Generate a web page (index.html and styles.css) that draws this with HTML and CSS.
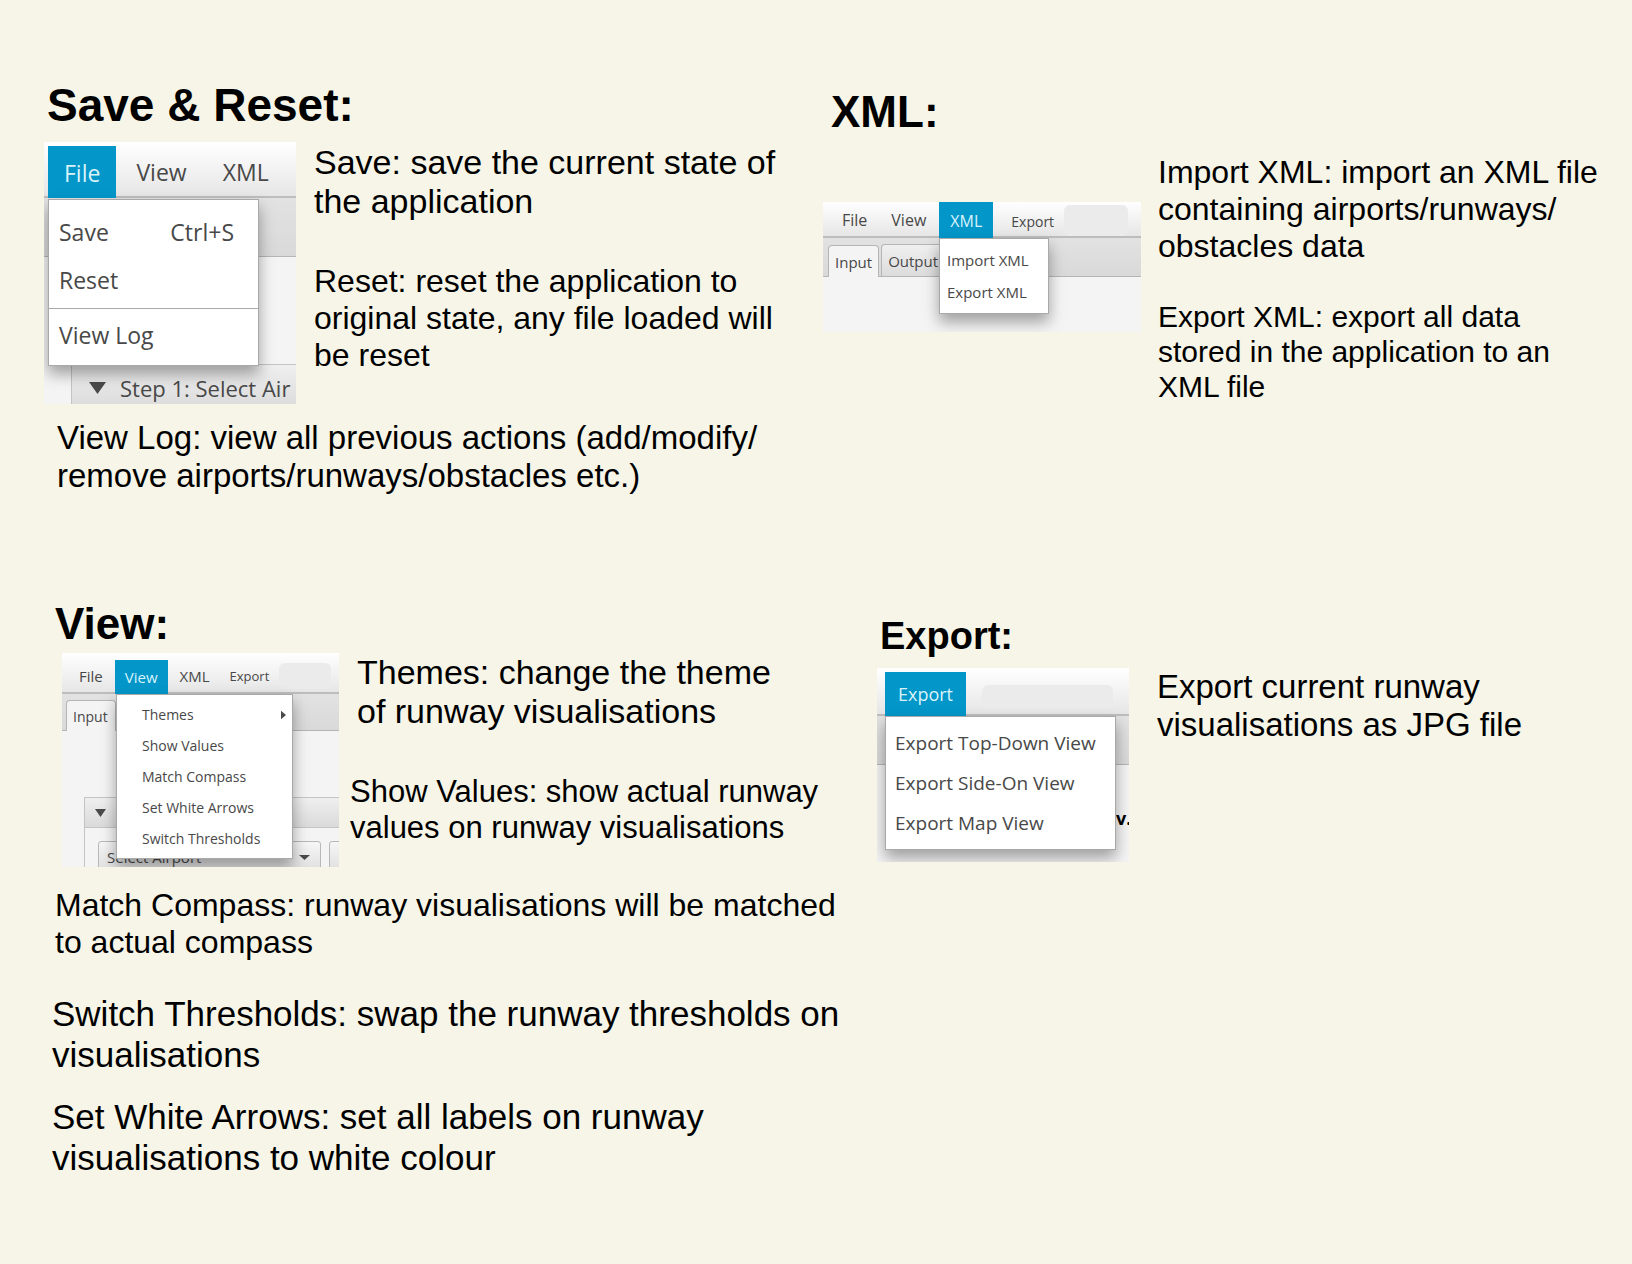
FILE: index.html
```html
<!DOCTYPE html>
<html lang="en">
<head>
<meta charset="utf-8">
<meta name="viewport" content="width=device-width, initial-scale=1">
<title>Menu guide</title>
<link rel="stylesheet" href="styles.css">
</head>
<body>
<main>
  <div class="row row-top">
    <section class="topic save">
      <h2 class="title-xl">Save &amp; Reset:</h2>
      <div class="media">
        <div class="shot shot-save">
          <div class="menubar">
            <button class="active">File</button><button>View</button><button>XML</button>
          </div>
          <div class="tabs"></div>
          <div class="pane">
            <div class="pane-head"><svg class="tri" viewBox="0 0 10 7" preserveAspectRatio="none"><path d="M0 0h10L5 7z"/></svg>Step 1: Select Air</div>
          </div>
          <div class="popup">
            <button>Save<span>Ctrl+S</span></button>
            <button>Reset</button>
            <hr>
            <button>View Log</button>
          </div>
        </div>
        <div class="notes">
          <p class="text-34">Save: save the current state of<br>the application</p>
          <p class="text-32">Reset: reset the application to<br>original state, any file loaded will<br>be reset</p>
        </div>
      </div>
      <p class="text-33 log">View Log: view all previous actions (add/modify/<br>remove airports/runways/obstacles etc.)</p>
    </section>

    <section class="topic xml">
      <h2 class="title-lg">XML:</h2>
      <div class="media">
        <div class="shot shot-xml">
          <div class="menubar">
            <button>File</button><button>View</button><button class="active">XML</button><button class="small">Export</button><span class="blank"></span>
          </div>
          <div class="tabs"><button class="selected">Input</button><button>Output</button></div>
          <div class="popup">
            <button>Import XML</button>
            <button>Export XML</button>
          </div>
        </div>
        <div class="notes">
          <p class="text-32">Import XML: import an XML file<br>containing airports/runways/<br>obstacles data</p>
          <p class="text-30">Export XML: export all data<br>stored in the application to an<br>XML file</p>
        </div>
      </div>
    </section>
  </div>

  <div class="row row-bottom">
    <section class="topic view">
      <h2 class="title-lg">View:</h2>
      <div class="media">
        <div class="shot shot-view">
          <div class="menubar">
            <button>File</button><button class="active">View</button><button>XML</button><button class="small">Export</button><span class="blank"></span>
          </div>
          <div class="tabs"><button class="selected">Input</button></div>
          <div class="pane">
            <div class="pane-head"><svg class="tri" viewBox="0 0 10 7" preserveAspectRatio="none"><path d="M0 0h10L5 7z"/></svg></div>
            <div class="fields">
              <button class="combo">Select Airport<svg class="tri" viewBox="0 0 10 6" preserveAspectRatio="none"><path d="M0 0h10L5 6z"/></svg></button>
              <button class="combo"></button>
            </div>
          </div>
          <div class="popup">
            <button>Themes<svg class="sub" viewBox="0 0 6 10"><path d="M0 0v10l6-5z"/></svg></button>
            <button>Show Values</button>
            <button>Match Compass</button>
            <button>Set White Arrows</button>
            <button>Switch Thresholds</button>
          </div>
        </div>
        <div class="notes">
          <p class="text-34 inset">Themes: change the theme<br>of runway visualisations</p>
          <p class="text-31">Show Values: show actual runway<br>values on runway visualisations</p>
        </div>
      </div>
      <div class="more">
        <p class="text-32 compass">Match Compass: runway visualisations will be matched<br>to actual compass</p>
        <p class="text-35">Switch Thresholds: swap the runway thresholds on<br>visualisations</p>
        <p class="text-35">Set White Arrows: set all labels on runway<br>visualisations to white colour</p>
      </div>
    </section>

    <section class="topic export">
      <h2 class="title-md">Export:</h2>
      <div class="media">
        <div class="shot shot-export">
          <div class="menubar">
            <button class="active">Export</button><span class="blank"></span>
          </div>
          <div class="tabs"></div>
          <div class="page"><b>v.</b></div>
          <div class="popup">
            <button>Export Top-Down View</button>
            <button>Export Side-On View</button>
            <button>Export Map View</button>
          </div>
        </div>
        <div class="notes">
          <p class="text-33">Export current runway<br>visualisations as JPG file</p>
        </div>
      </div>
    </section>
  </div>
</main>
</body>
</html>
```

FILE: styles.css
```css
* { box-sizing: border-box; }

body {
  margin: 0;
  min-height: 100vh;
  background: #f6f5e7;
  color: #000;
  font-family: "Liberation Sans", Arial, sans-serif;
}

h2, p { margin: 0; }

main {
  display: flex;
  flex-direction: column;
  gap: 104px;
  padding: 79px 0 80px;
}

.row { display: grid; }
.row-top { grid-template-columns: 823fr 809fr; }
.row-bottom { grid-template-columns: 877fr 755fr; }

.topic { min-width: 0; white-space: nowrap; }
.media { display: flex; align-items: flex-start; }
.notes { display: flex; flex-direction: column; }

/* Type scale */
.title-xl { font-size: 46px; line-height: 52px; }
.title-lg { font-size: 44px; line-height: 50px; }
.title-md { font-size: 38px; line-height: 44px; }
.text-35 { font-size: 35px; line-height: 41px; }
.text-34 { font-size: 34px; line-height: 39px; }
.text-33 { font-size: 33px; line-height: 38px; }
.text-32 { font-size: 32px; line-height: 37px; }
.text-31 { font-size: 31px; line-height: 36px; }
.text-30 { font-size: 30px; line-height: 35px; }

/* Topics */
.save { padding-left: 44px; }
.save h2 { padding-left: 3px; }
.save .media { gap: 18px; margin: 11px 0 15px; }
.save .notes { gap: 42px; padding-top: 1px; }
.log { padding-left: 13px; }

.xml { padding-top: 8px; }
.xml h2 { padding-left: 8px; }
.xml .media { gap: 17px; margin-top: 17px; }
.xml .notes { gap: 34px; }
.xml .shot { margin-top: 48px; }

.view { padding-left: 52px; }
.view h2 { padding-left: 3px; }
.view .media { gap: 11px; margin: 4px 0 20px; padding-left: 10px; }
.view .notes { gap: 43px; }
.inset { padding-left: 7px; }
.more { display: flex; flex-direction: column; gap: 21px; }
.compass { padding: 0 0 11px 3px; }

.export { padding-top: 15px; }
.export h2 { padding-left: 3px; }
.export .media { gap: 28px; margin-top: 10px; }

/* Application windows */
.shot {
  position: relative;
  flex: none;
  display: flex;
  flex-direction: column;
  overflow: hidden;
  background: #f4f4f4;
  color: #484848;
  font-family: "Open Sans", "Noto Sans", sans-serif;
}
.shot button {
  margin: 0;
  border: 0;
  padding: 0;
  background: none;
  color: inherit;
  font: inherit;
  text-align: left;
}
.shot svg { display: block; flex: none; fill: #4a4a4a; }

.menubar {
  flex: none;
  display: flex;
  background: linear-gradient(#fff, #e6e6e6);
  border-bottom: 2px solid #bdbdbd;
}
.shot .menubar .active { background: #0396c9; color: #d9f3fb; margin-bottom: -2px; }
.blank { background: #ebebeb; border-radius: 6px; }

.tabs {
  flex: none;
  display: flex;
  align-items: flex-end;
  background: linear-gradient(#e2e2e2, #d9d9d9);
  border-bottom: 1px solid #b5b5b5;
}
.shot .tabs button {
  border: 1px solid #b5b5b5;
  border-bottom: 0;
  border-radius: 4px 4px 0 0;
  background: linear-gradient(#f0f0f0, #dcdcdc);
}
.shot .tabs .selected { background: #f4f4f4; margin-bottom: -1px; }

.popup {
  position: absolute;
  display: flex;
  flex-direction: column;
  background: #fff;
  border: 1px solid #a9a9a9;
  box-shadow: 0 8px 14px rgba(0, 0, 0, .35);
}
.popup hr { width: 100%; border: 0; border-top: 1px solid #a9a9a9; margin: 4px 0 2px; }
.shot .popup button { display: flex; justify-content: space-between; align-items: center; }

.pane { border: 1px solid #c4c4c4; border-right: 0; border-bottom: 0; }
.pane-head { display: flex; align-items: center; background: linear-gradient(#efefef, #dadada); }

.shot-save { width: 252px; height: 262px; font-size: 23px; }
.shot-save .menubar { height: 56px; padding: 4px 4px 0; gap: 4px; }
.shot-save .menubar button { padding: 2px 16px 0; }
.shot-save .tabs { height: 59px; }
.shot-save .pane { margin: 107px 0 0 27px; }
.shot-save .pane-head { height: 46px; padding-left: 17px; gap: 14px; font-size: 22px; }
.shot-save .tri { width: 17px; height: 12px; }
.shot-save .popup { left: 4px; top: 57px; width: 211px; padding: 8px 0 6px; }
.shot-save .popup button { padding: 0 24px 0 10px; line-height: 48px; }

.shot-xml { width: 318px; height: 130px; font-size: 16px; }
.shot-xml .menubar { height: 36px; padding-left: 8px; gap: 2px; }
.shot-xml .menubar button { padding: 1px 11px 0; }
.shot-xml .menubar .small { padding: 4px 8px 0 16px; font-size: 14px; }
.shot-xml .blank { width: 64px; margin-top: 3px; }
.shot-xml .tabs { height: 39px; padding-left: 5px; gap: 2px; }
.shot-xml .tabs button { height: 32px; padding: 0 6px; font-size: 15px; }
.shot-xml .popup { left: 116px; top: 36px; width: 110px; padding: 5px 0; font-size: 15px; }
.shot-xml .popup button { padding-left: 7px; line-height: 32px; }

.shot-view { width: 277px; height: 214px; font-size: 15px; }
.shot-view .menubar { height: 41px; padding: 7px 7px 0; gap: 2px; }
.shot-view .menubar button { padding: 0 10px; }
.shot-view .menubar .small { padding: 0 8px; font-size: 13px; }
.shot-view .blank { width: 52px; margin: 3px 0; }
.shot-view .tabs { height: 37px; padding-left: 4px; }
.shot-view .tabs button { width: 50px; height: 31px; padding: 0 6px; font-size: 14px; }
.shot-view .pane { margin: 66px 0 0 22px; }
.shot-view .pane-head { height: 30px; padding-left: 10px; border-bottom: 1px solid #c4c4c4; }
.shot-view .tri { width: 11px; height: 8px; }
.fields { display: flex; gap: 8px; padding: 13px 0 0 13px; }
.shot .combo {
  display: flex;
  align-items: center;
  justify-content: space-between;
  flex: none;
  width: 223px;
  height: 32px;
  padding: 0 10px 0 8px;
  border: 1px solid #b8b8b8;
  border-radius: 3px;
  background: linear-gradient(#f6f6f6, #dedede);
}
.shot-view .combo .tri { height: 5px; }
.shot-view .popup { left: 54px; top: 41px; width: 177px; padding: 4px 0; font-size: 14px; }
.shot-view .popup button { padding: 0 6px 0 25px; line-height: 31px; }
.sub { width: 5px; height: 10px; }

.shot-export { width: 252px; height: 194px; font-size: 18px; }
.shot-export .menubar { height: 48px; padding: 4px 8px 0; gap: 16px; }
.shot-export .menubar button { padding: 0 13px; }
.shot-export .blank { width: 131px; height: 24px; margin-top: 13px; }
.shot-export .tabs { height: 49px; }
.shot-export .page { padding: 35px 0 0 239px; line-height: 36px; font-size: 18px; color: #000; }
.shot-export .popup { left: 8px; top: 48px; width: 231px; padding: 6px 0; font-size: 19px; }
.shot-export .popup button { padding-left: 9px; line-height: 40px; }
```
